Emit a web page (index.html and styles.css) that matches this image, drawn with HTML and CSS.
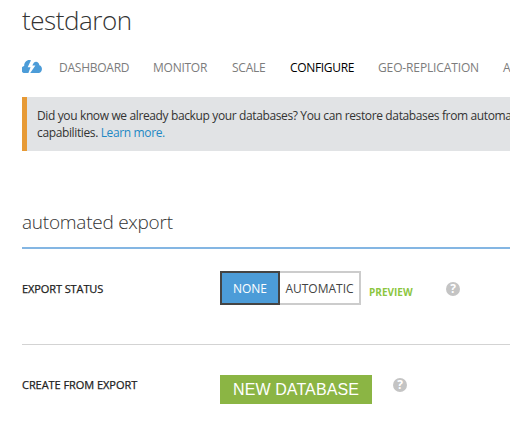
FILE: index.html
```html
<!DOCTYPE html>
<html lang="en">
<head>
<meta charset="utf-8">
<title>testdaron</title>
<link rel="stylesheet" href="styles.css">
</head>
<body>
<main class="page">
  <h1 class="title">testdaron</h1>
  <nav class="tabs">
    <svg class="cloud" viewBox="0 0 20 13" width="20" height="13"><path fill="#4c9cd8" d="M3.500 13A3.500 3.500 0 0 1 2.200 6.100C2 3 4.200 .1 7.400 .1L9 .3 5.700 7.200h2.900L6.400 13ZM8.200 13l5.200-7.500H10.300l1.500-2.700C13.500 .8 17 1.500 17.400 5.300 21.200 6.500 20.500 12.600 17 13Z"/></svg>
    <a>DASHBOARD</a>
    <a>MONITOR</a>
    <a>SCALE</a>
    <a class="active">CONFIGURE</a>
    <a class="geo">GEO-REPLICATION</a>
    <a>A</a>
  </nav>
  <div class="notice">Did you know we already backup your databases? You can restore databases from automa<br>capabilities. <a class="link">Learn more.</a></div>
  <h2 class="section">automated export</h2>
  <div class="row status">
    <div class="label">EXPORT STATUS</div>
    <div class="toggle"><div class="opt none">NONE</div><div class="opt auto">AUTOMATIC</div></div>
    <div class="preview">PREVIEW</div>
    <div class="help">?</div>
  </div>
  <div class="row create">
    <div class="label">CREATE FROM EXPORT</div>
    <div class="button">NEW DATABASE</div>
    <div class="help">?</div>
  </div>
</main>
</body>
</html>
```
FILE: styles.css
```css
* { box-sizing: border-box; }
html, body { margin: 0; height: 100%; overflow: hidden; background: #fff; }
body { font-family: "Open Sans", "Noto Sans", sans-serif; color: #333; }
.page { padding-left: 22px; height: 423px; overflow: hidden; white-space: nowrap; }
.title { margin: 0; height: 56px; font-size: 26px; font-weight: 300; line-height: 40px; color: #333; letter-spacing: -0.45px; }
.tabs { display: grid; grid-template-columns: 37px 94px 79px 58px 88px 125px auto; height: 41px; padding-top: 2px; font-size: 12px; line-height: 20px; color: #7c7c7c; letter-spacing: -0.25px; }
.geo { letter-spacing: -0.13px; }
.cloud { display: block; margin-top: 2px; }
.active { color: #000; letter-spacing: -0.32px; }
.notice { height: 54px; border-left: 5px solid #e79a35; background: #e1e3e5; padding: 10px 0 0 10px; font-size: 12px; line-height: 17px; overflow: hidden; letter-spacing: -0.37px; }
.link { color: #2188c4; }
.section { margin: 53px 0 0; height: 45px; border-bottom: 2px solid #84b6e3; font-size: 19px; font-weight: 300; line-height: 36px; color: #333; letter-spacing: -0.25px; }
.row { display: flex; align-items: flex-start; }
.status { height: 96px; border-bottom: 1px solid #d3d3d3; padding-top: 22px; }
.label { width: 198px; font-size: 11px; line-height: 16px; padding-top: 10px; color: #222; letter-spacing: -0.1px; -webkit-text-stroke: 0.25px #222; }
.toggle { display: flex; width: 141px; height: 34px; font-size: 12px; line-height: 31px; text-align: center; }
.opt { border: 2px solid #ccc; height: 34px; }
.none { width: 60px; border-color: #444; background: #4c9cd8; color: #fff; }
.auto { width: 81px; border-left: 0; color: #444; }
.preview { width: 85px; padding: 14px 0 0 8px; font-size: 10px; line-height: 14px; font-weight: 700; color: #8cc63f; }
.help { width: 14px; height: 14px; border-radius: 50%; background: #c4c4c4; color: #fff; font: bold 12px/14px "Open Sans", sans-serif; text-align: center; }
.status .help { margin-top: 11px; }
.create { padding-top: 30px; }
.create .label { padding-top: 2px; letter-spacing: -0.05px; }
.button { width: 152px; height: 29px; background: #8bb544; color: #fff; font: 16px/29px "Liberation Sans", sans-serif; text-align: center; margin-right: 21px; letter-spacing: 0.1px; }
.create .help { margin-top: 3px; }
```
